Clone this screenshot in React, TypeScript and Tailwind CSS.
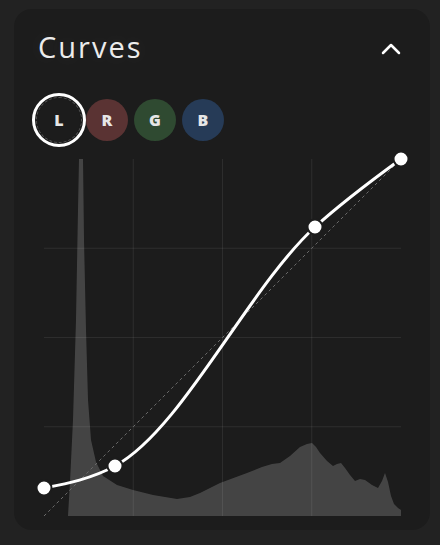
import React from "react";

const hist =
  "M68 516 L70 482 L73 420 L76 320 L78 210 L79 159 L83 159 L84 240 L86 330 L88 400 L91 440 L96 462 L103 476 L117 485 L133 490 L153 495 L177 499 L190 497 L200 493 L212 487 L220 483 L247 473 L262 467 L272 464 L280 463 L290 456 L300 447 L307 444 L312 443 L316 447 L320 453 L327 461 L333 466 L337 464 L341 463 L345 468 L350 475 L355 481 L360 479 L365 480 L372 485 L378 488 L382 481 L385 473 L388 482 L391 496 L394 504 L398 508 L401 510 L401 516 Z";

const curve =
  "M44 488 C67.7 483.4 91.3 478.8 115 466 C181.7 429.9 248.3 287.8 315 227 C343.7 200.8 372.3 179.9 401 159";

const points: [number, number][] = [
  [44, 488],
  [115, 466],
  [315, 227],
  [401, 159],
];

const channels = [
  { key: "R", bg: "bg-[#5a3333]" },
  { key: "G", bg: "bg-[#2f4a31]" },
  { key: "B", bg: "bg-[#263b57]" },
];

function CurvesChart() {
  const cols = [133.25, 222.5, 311.75];
  const rows = [248.25, 337.5, 426.75];
  return (
    <svg width={376} height={376} viewBox="34 150 376 376" className="block">
      <path d={hist} fill="rgba(255,255,255,0.18)" strokeLinejoin="round" />
      {cols.map((x) => (
        <line key={x} x1={x} y1={159} x2={x} y2={516} stroke="rgba(255,255,255,0.08)" strokeWidth={1} />
      ))}
      {rows.map((y) => (
        <line key={y} x1={44} y1={y} x2={401} y2={y} stroke="rgba(255,255,255,0.08)" strokeWidth={1} />
      ))}
      <line x1={44} y1={516} x2={401} y2={159} stroke="#6a6a6a" strokeWidth={1} strokeDasharray="3 3" />
      <path d={curve} fill="none" stroke="#ffffff" strokeWidth={3} strokeLinecap="round" />
      {points.map(([x, y]) => (
        <circle key={x} cx={x} cy={y} r={7.5} fill="#ffffff" stroke="#1c1c1c" strokeWidth={2} />
      ))}
    </svg>
  );
}

export default function App() {
  return (
    <div className="min-h-screen bg-[#222222] pt-[9px] pl-[14px]" style={{ fontFamily: "'Open Sans', sans-serif" }}>
      <section className="w-[416px] h-[521px] rounded-[18px] bg-[#1c1c1c] flex flex-col">
        <header className="flex items-center justify-between pl-[24px] pr-[29px] pt-[20px]">
          <h2 className="text-[29px] leading-[36px] tracking-[2px] text-[#ececec] [text-shadow:0_0_18px_rgba(255,255,255,0.12)]">
            Curves
          </h2>
          <svg width={20} height={13} viewBox="0 0 20 13" className="mt-[2px]">
            <polyline points="2,11 10,3 18,11" fill="none" stroke="#ffffff" strokeWidth={2.5} strokeLinecap="round" strokeLinejoin="round" />
          </svg>
        </header>

        <div className="flex items-center gap-[6px] pl-[24px] mt-[34px]">
          <button className="relative w-[42px] h-[42px] rounded-full bg-[#1c1c1c] text-[16px] font-extrabold text-[#e6e6e6] flex items-center justify-center">
            <span className="absolute -inset-[2px] rounded-full border border-dashed border-[#555555]" />
            <span className="absolute -inset-[6px] rounded-full border-[3px] border-white" />
            L
          </button>
          {channels.map((c) => (
            <button
              key={c.key}
              className={`w-[42px] h-[42px] rounded-full ${c.bg} text-[16px] font-extrabold text-[#e6e6e6] flex items-center justify-center`}
            >
              {c.key}
            </button>
          ))}
        </div>

        <div className="pl-[20px] mt-[9px]">
          <CurvesChart />
        </div>
      </section>
    </div>
  );
}
